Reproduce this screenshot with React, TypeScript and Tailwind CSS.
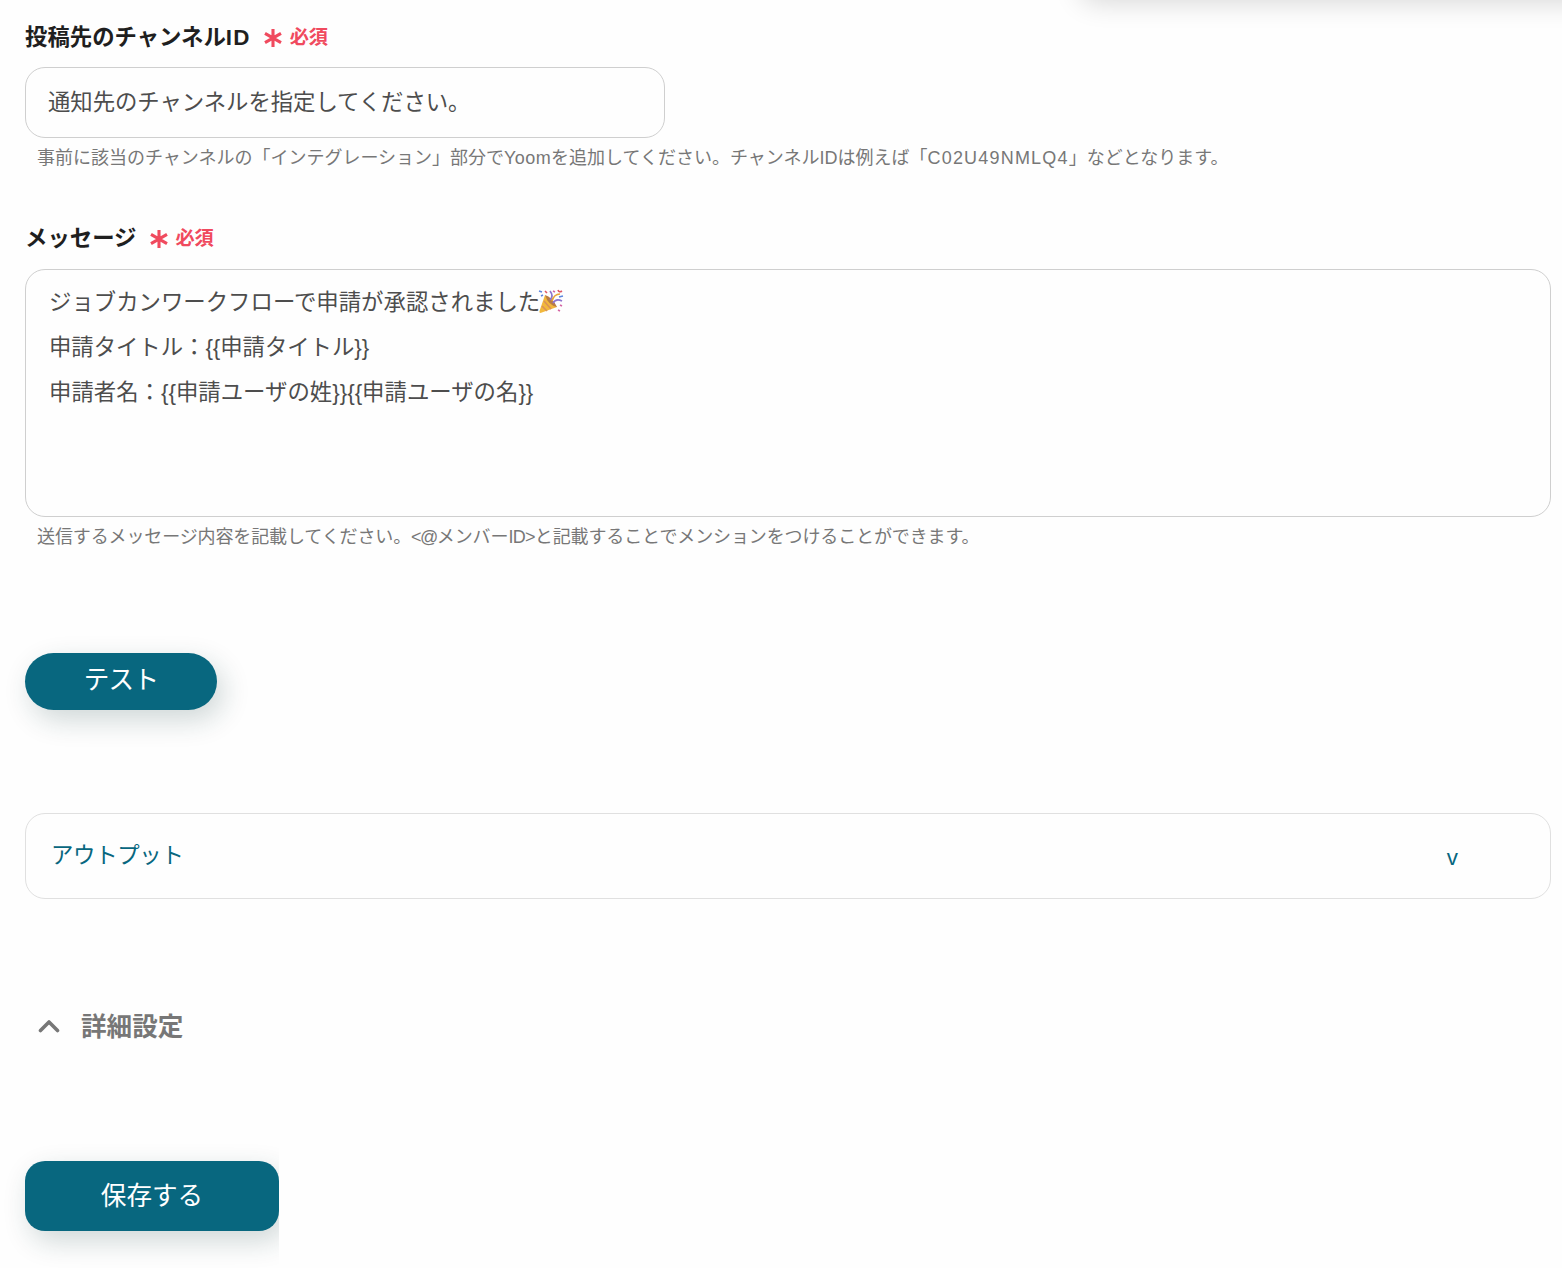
import React from "react";

function RequiredMark() {
  return (
    <span className="flex items-center text-[#f04a5e]">
      <svg width="18" height="20" viewBox="0 0 18 20" fill="none" stroke="currentColor" strokeWidth="3.1">
        <path d="M9 1v18M1 5.4l16 9.2M17 5.4L1 14.6" />
      </svg>
      <span className="ml-[8px] text-[19.2px] leading-[28px] font-bold tracking-[-0.3px]">必須</span>
    </span>
  );
}

function FieldLabel({ text, suffix }: { text: string; suffix?: string }) {
  return (
    <div className="flex h-[32px] items-center gap-[13px]">
      <span className="text-[22.4px] leading-[32px] font-bold text-[#1f1f1f]">
        {text}
        {suffix && <span className="tracking-[1.3px]">{suffix}</span>}
      </span>
      <RequiredMark />
    </div>
  );
}

function PartyPopper() {
  return (
    <svg className="ml-[-2px] inline-block align-[-4px]" width="26" height="25" viewBox="0 0 26 25" fill="none">
      <path d="M7 6L19 18L2.5 24Q1 24 1.5 22Z" fill="#f2b83c" />
      <path d="M6 12l7 8M4 17l5 5" stroke="#d9925a" strokeWidth="1.6" />
      <path d="M7 6Q14 8 19 18Q10 16 7 6Z" fill="#b87c45" />
      <path d="M12 11Q16 7 12 2M15 14Q18 9 24 12" stroke="#8d75cf" strokeWidth="1.7" />
      <path d="M14 12Q16 5 22 5" stroke="#e8a33a" strokeWidth="1.6" />
      <path d="M20 1q1 3 4 1M7 2l2 2" stroke="#df5664" strokeWidth="1.6" />
      <path d="M1 2l3 1M21 8l4-1M3 7l2-1" stroke="#5e86dd" strokeWidth="1.5" />
      <path d="M15 2l2 1M22 16l2 1M20 21l2 1" stroke="#d565a4" strokeWidth="1.6" />
    </svg>
  );
}

function App() {
  return (
    <div className="relative h-[1268px] w-[1562px] overflow-hidden bg-[#fefefe] pt-[22px] pl-[25px] font-['Liberation_Sans','Noto_Sans_CJK_JP',sans-serif] text-[#4d4d4d]">
      <div className="absolute -top-[40px] left-[1080px] h-[36px] w-[540px] rounded-[16px] shadow-[0_6px_28px_rgba(0,0,0,0.16)]" />

      <FieldLabel text="投稿先のチャンネル" suffix="ID" />
      <div className="mt-[13px] flex h-[71px] w-[640px] items-center rounded-[20px] border border-[#cfcfcf] pl-[22px] text-[22.4px] tracking-[-0.05px]">
        通知先のチャンネルを指定してください。
      </div>
      <p className="mt-[6px] ml-[12px] text-[18px] leading-[28px] whitespace-nowrap text-[#777]">
        事前に該当のチャンネルの「インテグレーション」部分で<span className="tracking-[0.4px]">Yoom</span>
        を追加してください。チャンネルIDは例えば「<span className="tracking-[1.2px]">C02U49NMLQ4</span>」などとなります。
      </p>

      <div className="mt-[51px]">
        <FieldLabel text="メッセージ" />
      </div>
      <div className="mt-[14px] h-[248px] w-[1526px] rounded-[20px] border border-[#cfcfcf] pt-[11px] pl-[23px] text-[22.4px] leading-[44.8px]">
        <p className="h-[44.8px]">
          ジョブカンワークフローで申請が承認されました
          <PartyPopper />
        </p>
        <p className="tracking-[-0.05px]">申請タイトル：{"{{申請タイトル}}"}</p>
        <p>申請者名：{"{{申請ユーザの姓}}{{申請ユーザの名}}"}</p>
      </div>
      <p className="mt-[6px] ml-[12px] text-[18px] leading-[28px] tracking-[-0.12px] whitespace-nowrap text-[#777]">
        送信するメッセージ内容を記載してください。<span className="tracking-[-1.5px]">{"<@"}</span>メンバー
        <span className="tracking-[-0.7px]">{"ID>"}</span>と記載することでメンションをつけることができます。
      </p>

      <button className="mt-[102px] flex h-[57px] w-[192px] items-center justify-center rounded-full bg-[#08677f] pb-[2px] text-[25.6px] tracking-[-0.7px] text-white shadow-[6px_10px_28px_rgba(20,60,60,0.2)]">
        テスト
      </button>

      <div className="mt-[103px] flex h-[86px] w-[1526px] items-center justify-between rounded-[20px] border border-[#e0e0e0] pr-[92px] pl-[25px] text-[22.4px] text-[#08677f]">
        <span className="tracking-[-0.3px]">アウトプット</span>
        <span className="pt-[3px]">v</span>
      </div>

      <div className="mt-[108px] ml-[13px] flex h-[40px] items-center gap-[21px] text-[#777]">
        <svg className="mb-[2px]" width="22" height="14" viewBox="0 0 22 14" fill="none" stroke="currentColor" strokeWidth="3.6" strokeLinecap="round" strokeLinejoin="round">
          <path d="M2.5 11.5L11 3l8.5 8.5" />
        </svg>
        <span className="text-[25.6px] leading-[40px] font-bold">詳細設定</span>
      </div>

      <div className="mt-[94px] -ml-[25px] h-[127px] w-[279px] overflow-hidden pt-[20px] pl-[25px]">
        <button className="flex h-[70px] w-[254px] items-center justify-center rounded-[20px] bg-[#08677f] text-[25.6px] text-white shadow-[6px_10px_28px_rgba(20,60,60,0.2)]">
          保存する
        </button>
      </div>
    </div>
  );
}

export default App;
